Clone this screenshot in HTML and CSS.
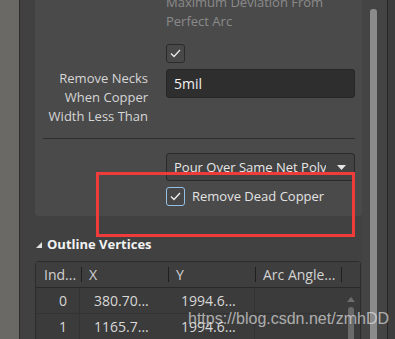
FILE: index.html
```html
<!DOCTYPE html>
<html>
<head>
    <meta charset="UTF-8">
    <title>Polygon Pour Properties</title>
    <link rel="stylesheet" href="styles.css">
</head>
<body>
    <div class="side-strip"></div>

    <div class="panel">
        <div class="panel-body">
            <div class="section">
                <div class="prop-row first-row">
                    <div class="prop-label">Approximation</div>
                    <div class="prop-value disabled-text">Maximum Deviation From<br>Perfect Arc</div>
                </div>

                <div class="prop-row check-row">
                    <div class="prop-label"></div>
                    <div class="prop-value">
                        <span class="check-box">
                            <svg width="11" height="9" viewBox="0 0 11 9"><polyline points="1,4.5 4,7.5 10,1" fill="none" stroke="#e8e8e8" stroke-width="1.3"/></svg>
                        </span>
                    </div>
                </div>

                <div class="prop-row necks-row">
                    <div class="prop-label">Remove Necks<br>When Copper<br>Width Less Than</div>
                    <div class="prop-value">
                        <div class="text-input">5mil</div>
                    </div>
                </div>

                <div class="divider"></div>

                <div class="prop-row pour-row">
                    <div class="prop-label"></div>
                    <div class="prop-value">
                        <div class="dropdown">
                            <span class="dropdown-text">Pour Over Same Net Polygons Only</span>
                            <svg class="dropdown-arrow" width="9" height="5" viewBox="0 0 9 5"><polygon points="0,0 9,0 4.5,5" fill="#e6e6e6"/></svg>
                        </div>
                    </div>
                </div>

                <div class="prop-row dead-row">
                    <div class="prop-label"></div>
                    <div class="prop-value check-line">
                        <span class="check-box focused">
                            <svg width="11" height="9" viewBox="0 0 11 9"><polyline points="1,4.5 4,7.5 10,1" fill="none" stroke="#f0f0f0" stroke-width="1.3"/></svg>
                        </span>
                        <span class="check-text">Remove Dead Copper</span>
                    </div>
                </div>
            </div>

            <div class="group-title">
                <svg width="6" height="6" viewBox="0 0 6 6"><polygon points="6,0 6,6 0,6" fill="#e0e0e0"/></svg>
                <span>Outline Vertices</span>
            </div>

            <div class="grid-table">
                <div class="grid-head">
                    <div class="head-cell">Ind...</div>
                    <div class="head-cell sep">X</div>
                    <div class="head-cell sep">Y</div>
                    <div class="head-cell sep">Arc Angle...</div>
                    <div class="head-cell sep"></div>
                </div>
                <div class="grid-body">
                    <div class="grid-rows">
                        <div class="grid-row">
                            <div class="cell cell-index">0</div>
                            <div class="cell">380.70...</div>
                            <div class="cell">1994.6...</div>
                            <div class="cell cell-last"></div>
                        </div>
                        <div class="grid-row">
                            <div class="cell cell-index">1</div>
                            <div class="cell">1165.7...</div>
                            <div class="cell">1994.6...</div>
                            <div class="cell cell-last"></div>
                        </div>
                    </div>
                    <div class="grid-scroll">
                        <svg width="8" height="5" viewBox="0 0 8 5"><polygon points="0,5 8,5 4,0" fill="#6e6e6e"/></svg>
                        <div class="grid-thumb"></div>
                    </div>
                </div>
            </div>
        </div>

        <div class="scroll-track">
            <div class="scroll-thumb"></div>
        </div>
    </div>

    <div class="right-edge"></div>

    <!-- annotation drawn over the screenshot -->
    <div class="highlight-box"></div>
    <div class="watermark">https://blog.csdn.net/zmhDD</div>
</body>
</html>
```

FILE: styles.css
```css
body {
    margin: 0;
    padding: 0;
    height: 339px;
    overflow: hidden;
    display: flex;
    position: relative;
    font-family: "Open Sans", "Noto Sans", sans-serif;
    font-size: 13px;
    line-height: 19px;
    color: #d6d6d6;
    background-color: #404040;
}

.side-strip {
    width: 19px;
    flex-shrink: 0;
    background-color: #6b6966;
    border-right: 1px solid #2c2c2c;
}

.panel {
    width: 367px;
    flex-shrink: 0;
    display: flex;
    background-color: #414141;
}

.panel-body {
    width: 327px;
    padding-left: 15px;
    overflow: hidden;
}

.section {
    margin-top: -17px;
    padding: 0 7px 10px 8px;
    background-color: #4a4a4a;
    border-radius: 0 0 3px 3px;
}

.prop-row {
    display: flex;
}

.prop-label {
    width: 105px;
    margin-right: 18px;
    text-align: right;
    white-space: nowrap;
}

.prop-value {
    width: 189px;
}

.disabled-text {
    color: #8a8a8a;
    margin-top: 10px;
}

.check-row {
    margin-top: 13px;
}

.necks-row {
    margin-top: 6px;
}

.check-box {
    width: 17px;
    height: 17px;
    display: flex;
    align-items: center;
    justify-content: center;
    border: 1px solid #2b2b2b;
    border-radius: 3px;
    background-color: #484848;
}

.check-box.focused {
    border-color: #94c0e6;
    background-color: #474747;
}

.text-input {
    height: 27px;
    line-height: 27px;
    padding-left: 7px;
    border: 1px solid #262626;
    border-radius: 3px;
    background-color: #2e2e2e;
    color: #f2f2f2;
    font-size: 14px;
}

.divider {
    height: 1px;
    margin-top: 12px;
    background-color: #2f2f2f;
}

.pour-row {
    margin-top: 14px;
}

.dropdown {
    height: 26px;
    display: flex;
    align-items: center;
    padding: 0 8px 0 7px;
    border: 1px solid #2a2a2a;
    border-radius: 3px;
    background-color: #434343;
    color: #e6e6e6;
}

.dropdown-text {
    flex: 1;
    overflow: hidden;
    white-space: nowrap;
}

.dropdown-arrow {
    margin-left: 11px;
    flex-shrink: 0;
}

.dead-row {
    margin-top: 6px;
}

.check-line {
    display: flex;
    align-items: center;
}

.check-text {
    margin-left: 7px;
    color: #e2e2e2;
}

.group-title {
    display: flex;
    align-items: center;
    margin-top: 19px;
    padding-left: 1px;
    font-weight: bold;
    color: #f2f2f2;
}

.group-title svg {
    margin-right: 5px;
    margin-top: 1px;
}

.grid-table {
    width: 324px;
    margin-top: 7px;
    border: 1px solid #2c2c2c;
    border-bottom: none;
    border-radius: 4px 4px 0 0;
    background-color: #3b3b3b;
}

.grid-head {
    display: grid;
    grid-template-columns: 45px 87px 87px 86px 19px;
    height: 25px;
    border-bottom: 1px solid #2a2a2a;
    background-color: #3e3e3e;
}

.head-cell {
    line-height: 25px;
    padding-left: 8px;
    color: #d2d2d2;
    font-size: 14px;
    white-space: nowrap;
}

.head-cell.sep {
    background: linear-gradient(#1f1f1f, #1f1f1f) no-repeat left center / 1px 15px;
}

.grid-body {
    display: flex;
}

.grid-rows {
    width: 305px;
}

.grid-row {
    display: grid;
    grid-template-columns: 44px 87px 87px 87px;
    height: 25px;
    border-bottom: 1px solid #333333;
}

.cell {
    line-height: 25px;
    padding-left: 14px;
    font-size: 14px;
    color: #d8d8d8;
    white-space: nowrap;
}

.cell-index {
    text-align: right;
    padding-left: 0;
    padding-right: 12px;
    border-right: 1px solid #333333;
}

.cell-last {
    border-left: 1px solid #333333;
}

.grid-scroll {
    width: 19px;
    display: flex;
    flex-direction: column;
    align-items: center;
    padding-top: 9px;
}

.grid-thumb {
    width: 6px;
    height: 40px;
    margin-top: 5px;
    border-radius: 3px;
    background-color: #6a6a6a;
}

.scroll-track {
    width: 25px;
    background-color: #444444;
}

.scroll-thumb {
    width: 7px;
    height: 340px;
    margin: 9px 0 0 8px;
    border-radius: 3px 3px 0 0;
    background-color: #8b8b8b;
}

.right-edge {
    width: 7px;
    flex-shrink: 0;
    border-left: 1px solid #262626;
    background-color: #3d3d3d;
}

.highlight-box {
    position: absolute;
    left: 96px;
    top: 172px;
    width: 253px;
    height: 59px;
    border: 3px solid #f03b3b;
}

.watermark {
    position: absolute;
    left: 188px;
    top: 309px;
    font-family: "Liberation Sans", Arial, sans-serif;
    font-size: 16px;
    line-height: 20px;
    color: rgba(230, 230, 230, 0.68);
    white-space: nowrap;
}
```
